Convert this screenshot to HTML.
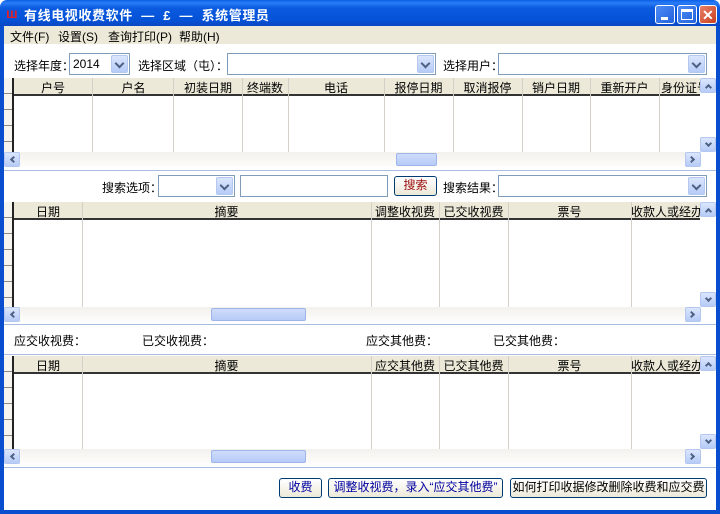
<!DOCTYPE html>
<html><head><meta charset="utf-8"><style>
*{box-sizing:border-box;margin:0;padding:0}
body{width:720px;height:514px;overflow:hidden;position:relative;background:#fff;font-family:"Liberation Sans","Noto Sans CJK SC","WenQuanYi Zen Hei",sans-serif;font-size:12px;color:#000}
.a{position:absolute}
.title{left:0;top:0;width:720px;height:26px;background:linear-gradient(#0a5fe8 0,#2a7cf6 3px,#0b5ae0 8px,#0552d6 20px,#0a48c4 26px);border-radius:7px 7px 0 0}
.title .t{left:24px;top:5px;color:#fff;font-weight:bold;font-size:13px;white-space:pre;letter-spacing:0.6px}
.lb{left:0;top:26px;width:4px;height:488px;background:#0a4ed0}
.rb{right:0;top:26px;width:4px;height:488px;background:#0a4ed0}
.bb{left:0;bottom:0;width:720px;height:4px;background:#0a4ed0}
.wb{top:5px;width:20px;height:19px;border:1px solid #fff;border-radius:3px;background:linear-gradient(135deg,#4d8cf7,#2462dc)}
.menu{left:4px;top:26px;width:712px;height:18px;background:#ece9d8}
.menu span{position:absolute;top:2px}
.cb{height:22px;border:1px solid #7f9db9;background:#fff}
.cb .dd{position:absolute;right:1px;top:1px;width:17px;height:18px;background:linear-gradient(#dbe6fd,#b6cbf7);border:1px solid #b3c7ef;border-radius:2px}
.cb .dd:after{content:"";position:absolute;left:4px;top:4px;width:5px;height:5px;border-right:2px solid #4d6185;border-bottom:2px solid #4d6185;transform:rotate(45deg)}
.grid{left:4px;width:712px}
.hdr{left:0;top:0;width:696px;height:18px;background:#ece9d8;border-bottom:2px solid #333}
.hdr span{position:absolute;top:1px;text-align:center;white-space:nowrap;overflow:hidden}
.rh{left:0;width:10px;border-right:2px solid #222;background:repeating-linear-gradient(#f5f4ef 0 15px,#888 15px 16px)}
.cl{top:0;width:1px;background:#d4d0c8}
.hs{left:0;width:696px;height:15px;background:linear-gradient(#f3f1ec,#fdfdfb)}
.btn{width:16px;height:15px;background:linear-gradient(#dbe6fd,#b6cbf7);border:1px solid #b3c7ef;border-radius:2px}
.thumb{height:13px;top:1px;background:linear-gradient(#cfdcfb,#b6cbf7);border:1px solid #9db5ea;border-radius:2px}
.sep{left:4px;width:712px;height:1px;background:#a9bde0}
.pb{height:20px;border:1px solid #003c74;border-radius:3px;background:linear-gradient(#fff,#ece9d8);text-align:center;line-height:17px}
.arr{position:absolute;left:5px;top:4px;width:5px;height:5px;border-left:2px solid #4d6185;border-bottom:2px solid #4d6185}
</style></head><body>
<div class="a title"><div class="a" style="left:6px;top:5px;color:#e0202a;font-weight:bold;font-size:14px">ш</div><div class="a t">有线电视收费软件  —  £  —  系统管理员</div>
<div class="a wb" style="left:655px"><div class="a" style="left:5px;top:11px;width:7px;height:3px;background:#fff"></div></div>
<div class="a wb" style="left:677px"><div class="a" style="left:3px;top:3px;width:12px;height:11px;border:1px solid #fff;border-top:3px solid #fff"></div></div>
<div class="a wb" style="left:699px;width:18px;background:linear-gradient(135deg,#e8806a,#c8401e)"><div class="a" style="left:2px;top:1px;color:#fff;font-weight:bold;font-size:14px">✕</div></div>
</div>
<div class="a lb"></div><div class="a rb"></div><div class="a bb"></div>
<div class="a menu"><span style="left:6px">文件(F)</span><span style="left:54px">设置(S)</span><span style="left:104px">查询打印(P)</span><span style="left:175px">帮助(H)</span></div>

<div class="a" style="left:14px;top:57px">选择年度：</div>
<div class="a cb" style="left:69px;top:53px;width:61px"><span class="a" style="left:3px;top:3px">2014</span><div class="dd"></div></div>
<div class="a" style="left:138px;top:57px">选择区域（屯）：</div>
<div class="a cb" style="left:227px;top:53px;width:209px"><div class="dd"></div></div>
<div class="a" style="left:443px;top:57px">选择用户：</div>
<div class="a cb" style="left:498px;top:53px;width:209px"><div class="dd"></div></div>

<div class="a grid" style="top:78px;height:90px">
<div class="a hdr"><span style="left:10px;width:78px">户号</span><span style="left:89px;width:81px">户名</span><span style="left:170px;width:68px">初装日期</span><span style="left:238px;width:46px">终端数</span><span style="left:284px;width:96px">电话</span><span style="left:380px;width:69px">报停日期</span><span style="left:449px;width:69px">取消报停</span><span style="left:518px;width:68px">销户日期</span><span style="left:586px;width:69px">重新开户</span><span style="left:655px;width:41px;text-align:left;padding-left:2px">身份证号</span></div>
<div class="a rh" style="top:0;height:74px"></div>
<div class="a cl" style="left:88px;height:74px"></div><div class="a cl" style="left:169px;height:74px"></div><div class="a cl" style="left:238px;height:74px"></div><div class="a cl" style="left:284px;height:74px"></div><div class="a cl" style="left:380px;height:74px"></div><div class="a cl" style="left:449px;height:74px"></div><div class="a cl" style="left:518px;height:74px"></div><div class="a cl" style="left:586px;height:74px"></div><div class="a cl" style="left:655px;height:74px"></div>
<div class="a btn" style="left:696px;top:0"><div class="arr" style="transform:rotate(135deg);top:6px"></div></div>
<div class="a btn" style="left:696px;top:59px"><div class="arr" style="transform:rotate(-45deg);top:3px"></div></div>
<div class="a hs" style="top:74px"><div class="a btn" style="left:0;top:0"><div class="arr" style="transform:rotate(45deg);left:6px"></div></div><div class="a thumb" style="left:392px;width:41px"></div><div class="a btn" style="left:681px;top:0"><div class="arr" style="transform:rotate(-135deg);left:3px"></div></div></div>
</div>
<div class="a sep" style="top:170px"></div>

<div class="a" style="left:102px;top:179px">搜索选项：</div>
<div class="a cb" style="left:158px;top:175px;width:77px"><div class="dd"></div></div>
<div class="a cb" style="left:240px;top:175px;width:148px"></div>
<div class="a pb" style="left:394px;top:176px;width:43px;color:#9b1010">搜索</div>
<div class="a" style="left:443px;top:179px">搜索结果：</div>
<div class="a cb" style="left:498px;top:175px;width:209px"><div class="dd"></div></div>

<div class="a grid" style="top:202px;height:120px">
<div class="a hdr"><span style="left:10px;width:68px">日期</span><span style="left:78px;width:289px">摘要</span><span style="left:367px;width:68px">调整收视费</span><span style="left:435px;width:69px">已交收视费</span><span style="left:504px;width:123px">票号</span><span style="left:627px;width:69px">收款人或经办</span></div>
<div class="a rh" style="top:0;height:105px"></div>
<div class="a cl" style="left:78px;height:105px"></div><div class="a cl" style="left:367px;height:105px"></div><div class="a cl" style="left:435px;height:105px"></div><div class="a cl" style="left:504px;height:105px"></div><div class="a cl" style="left:627px;height:105px"></div>
<div class="a btn" style="left:696px;top:0"><div class="arr" style="transform:rotate(135deg);top:6px"></div></div>
<div class="a btn" style="left:696px;top:90px"><div class="arr" style="transform:rotate(-45deg);top:3px"></div></div>
<div class="a hs" style="top:105px"><div class="a btn" style="left:0;top:0"><div class="arr" style="transform:rotate(45deg);left:6px"></div></div><div class="a thumb" style="left:207px;width:95px"></div><div class="a btn" style="left:681px;top:0"><div class="arr" style="transform:rotate(-135deg);left:3px"></div></div></div>
</div>
<div class="a sep" style="top:324px"></div>

<div class="a" style="left:14px;top:332px">应交收视费：</div>
<div class="a" style="left:142px;top:332px">已交收视费：</div>
<div class="a" style="left:366px;top:332px">应交其他费：</div>
<div class="a" style="left:493px;top:332px">已交其他费：</div>
<div class="a sep" style="top:354px"></div>

<div class="a grid" style="top:356px;height:108px">
<div class="a hdr"><span style="left:10px;width:68px">日期</span><span style="left:78px;width:289px">摘要</span><span style="left:367px;width:68px">应交其他费</span><span style="left:435px;width:69px">已交其他费</span><span style="left:504px;width:123px">票号</span><span style="left:627px;width:69px">收款人或经办</span></div>
<div class="a rh" style="top:0;height:93px"></div>
<div class="a cl" style="left:78px;height:93px"></div><div class="a cl" style="left:367px;height:93px"></div><div class="a cl" style="left:435px;height:93px"></div><div class="a cl" style="left:504px;height:93px"></div><div class="a cl" style="left:627px;height:93px"></div>
<div class="a btn" style="left:696px;top:0"><div class="arr" style="transform:rotate(135deg);top:6px"></div></div>
<div class="a btn" style="left:696px;top:78px"><div class="arr" style="transform:rotate(-45deg);top:3px"></div></div>
<div class="a hs" style="top:93px"><div class="a btn" style="left:0;top:0"><div class="arr" style="transform:rotate(45deg);left:6px"></div></div><div class="a thumb" style="left:207px;width:95px"></div><div class="a btn" style="left:681px;top:0"><div class="arr" style="transform:rotate(-135deg);left:3px"></div></div></div>
</div>
<div class="a sep" style="top:467px"></div>

<div class="a pb" style="left:279px;top:478px;width:43px;color:#0000a0">收费</div>
<div class="a pb" style="left:328px;top:478px;width:175px;color:#0000a0">调整收视费，录入“应交其他费”</div>
<div class="a pb" style="left:510px;top:478px;width:197px">如何打印收据修改删除收费和应交费</div>
</body></html>
